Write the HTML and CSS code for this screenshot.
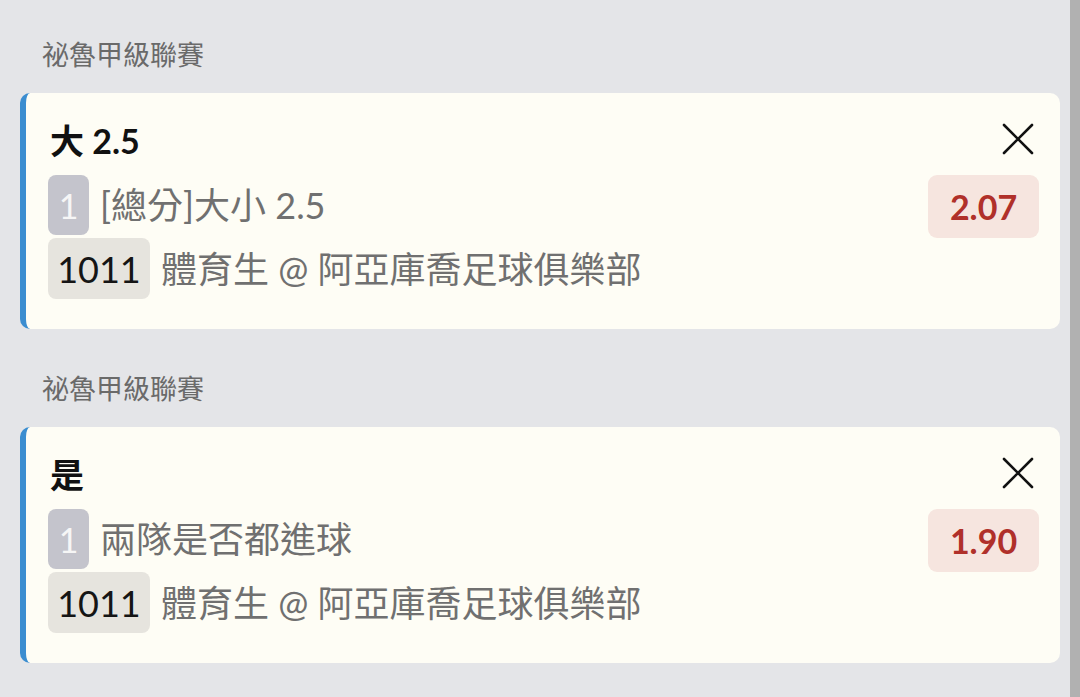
FILE: index.html
```html
<!DOCTYPE html>
<html lang="zh-Hant">
<head>
<meta charset="utf-8">
<title>投注單</title>
<link rel="stylesheet" href="styles.css">
</head>
<body>
<div class="screen">
  <main class="content">
    <section class="section">
      <h2 class="league">祕魯甲級聯賽</h2>
      <article class="card">
        <div class="title-row">
          <div class="title">大 2.5</div>
          <button class="close" aria-label="close">
            <svg width="32" height="32" viewBox="0 0 32 32"><path d="M2 2 L30 30 M30 2 L2 30" stroke="#111" stroke-width="2.6" stroke-linecap="round" fill="none"/></svg>
          </button>
        </div>
        <div class="body">
          <div class="line"><span class="badge badge-num">1</span><span class="text">[總分]大小 2.5</span></div>
          <div class="odds">2.07</div>
          <div class="line"><span class="badge badge-id">1011</span><span class="text">體育生 @ 阿亞庫喬足球俱樂部</span></div>
        </div>
      </article>
    </section>
    <section class="section">
      <h2 class="league">祕魯甲級聯賽</h2>
      <article class="card">
        <div class="title-row">
          <div class="title">是</div>
          <button class="close" aria-label="close">
            <svg width="32" height="32" viewBox="0 0 32 32"><path d="M2 2 L30 30 M30 2 L2 30" stroke="#111" stroke-width="2.6" stroke-linecap="round" fill="none"/></svg>
          </button>
        </div>
        <div class="body">
          <div class="line"><span class="badge badge-num">1</span><span class="text">兩隊是否都進球</span></div>
          <div class="odds">1.90</div>
          <div class="line"><span class="badge badge-id">1011</span><span class="text">體育生 @ 阿亞庫喬足球俱樂部</span></div>
        </div>
      </article>
    </section>
  </main>
  <div class="scrollbar"></div>
</div>
</body>
</html>
```

FILE: styles.css
```css
* { box-sizing: border-box; }
html, body { margin: 0; padding: 0; }
body {
  background: #e4e5e8;
  font-family: Lato, "Noto Sans CJK TC", sans-serif;
  width: 1080px;
  height: 697px;
  overflow: hidden;
}
.screen {
  display: flex;
  height: 697px;
}
.content {
  flex: 1;
  padding: 0 10px 0 20px;
  display: flex;
  flex-direction: column;
  gap: 5px;
}
.league {
  margin: 0;
  padding: 36px 0 21px 22px;
  font-size: 27px;
  line-height: 36px;
  font-weight: 400;
  color: #6a6a6a;
  font-family: "Noto Sans CJK TC", sans-serif;
}
.card {
  background: #fefdf5;
  border-left: 6px solid #3b8dd0;
  border-radius: 10px;
  padding: 28px 21px 30px 22px;
  height: 236px;
}
.title-row {
  display: flex;
  justify-content: space-between;
  align-items: center;
  height: 40px;
  margin-bottom: 14px;
}
.title {
  font-size: 34px;
  font-weight: 700;
  color: #111;
  line-height: 40px;
  padding-left: 2px;
}
.close {
  border: 0;
  background: none;
  padding: 0;
  margin: -4px 5px 0 0;
  width: 32px;
  height: 32px;
  display: flex;
}
.body {
  display: grid;
  grid-template-columns: 1fr auto;
  align-items: start;
}
.line {
  display: flex;
  align-items: center;
  gap: 11px;
  grid-column: 1;
}
.text {
  font-size: 36px;
  color: #707070;
  line-height: 44px;
}
.badge {
  display: flex;
  align-items: center;
  justify-content: center;
  height: 60px;
  border-radius: 8px;
  font-size: 34px;
}
.badge-num {
  width: 41px;
  background: #c4c4cc;
  color: #f6f6f6;
}
.badge-id {
  width: 102px;
  height: 61px;
  background: #e6e4de;
  color: #151515;
  font-size: 36px;
}
.odds {
  grid-column: 2;
  grid-row: 1;
  width: 111px;
  height: 63px;
  background: #f6e5df;
  color: #b0302a;
  border-radius: 9px;
  font-size: 34px;
  font-weight: 700;
  display: flex;
  align-items: center;
  justify-content: center;
}
.scrollbar {
  width: 10px;
  background: #b1b1b1;
  height: 697px;
}
```
